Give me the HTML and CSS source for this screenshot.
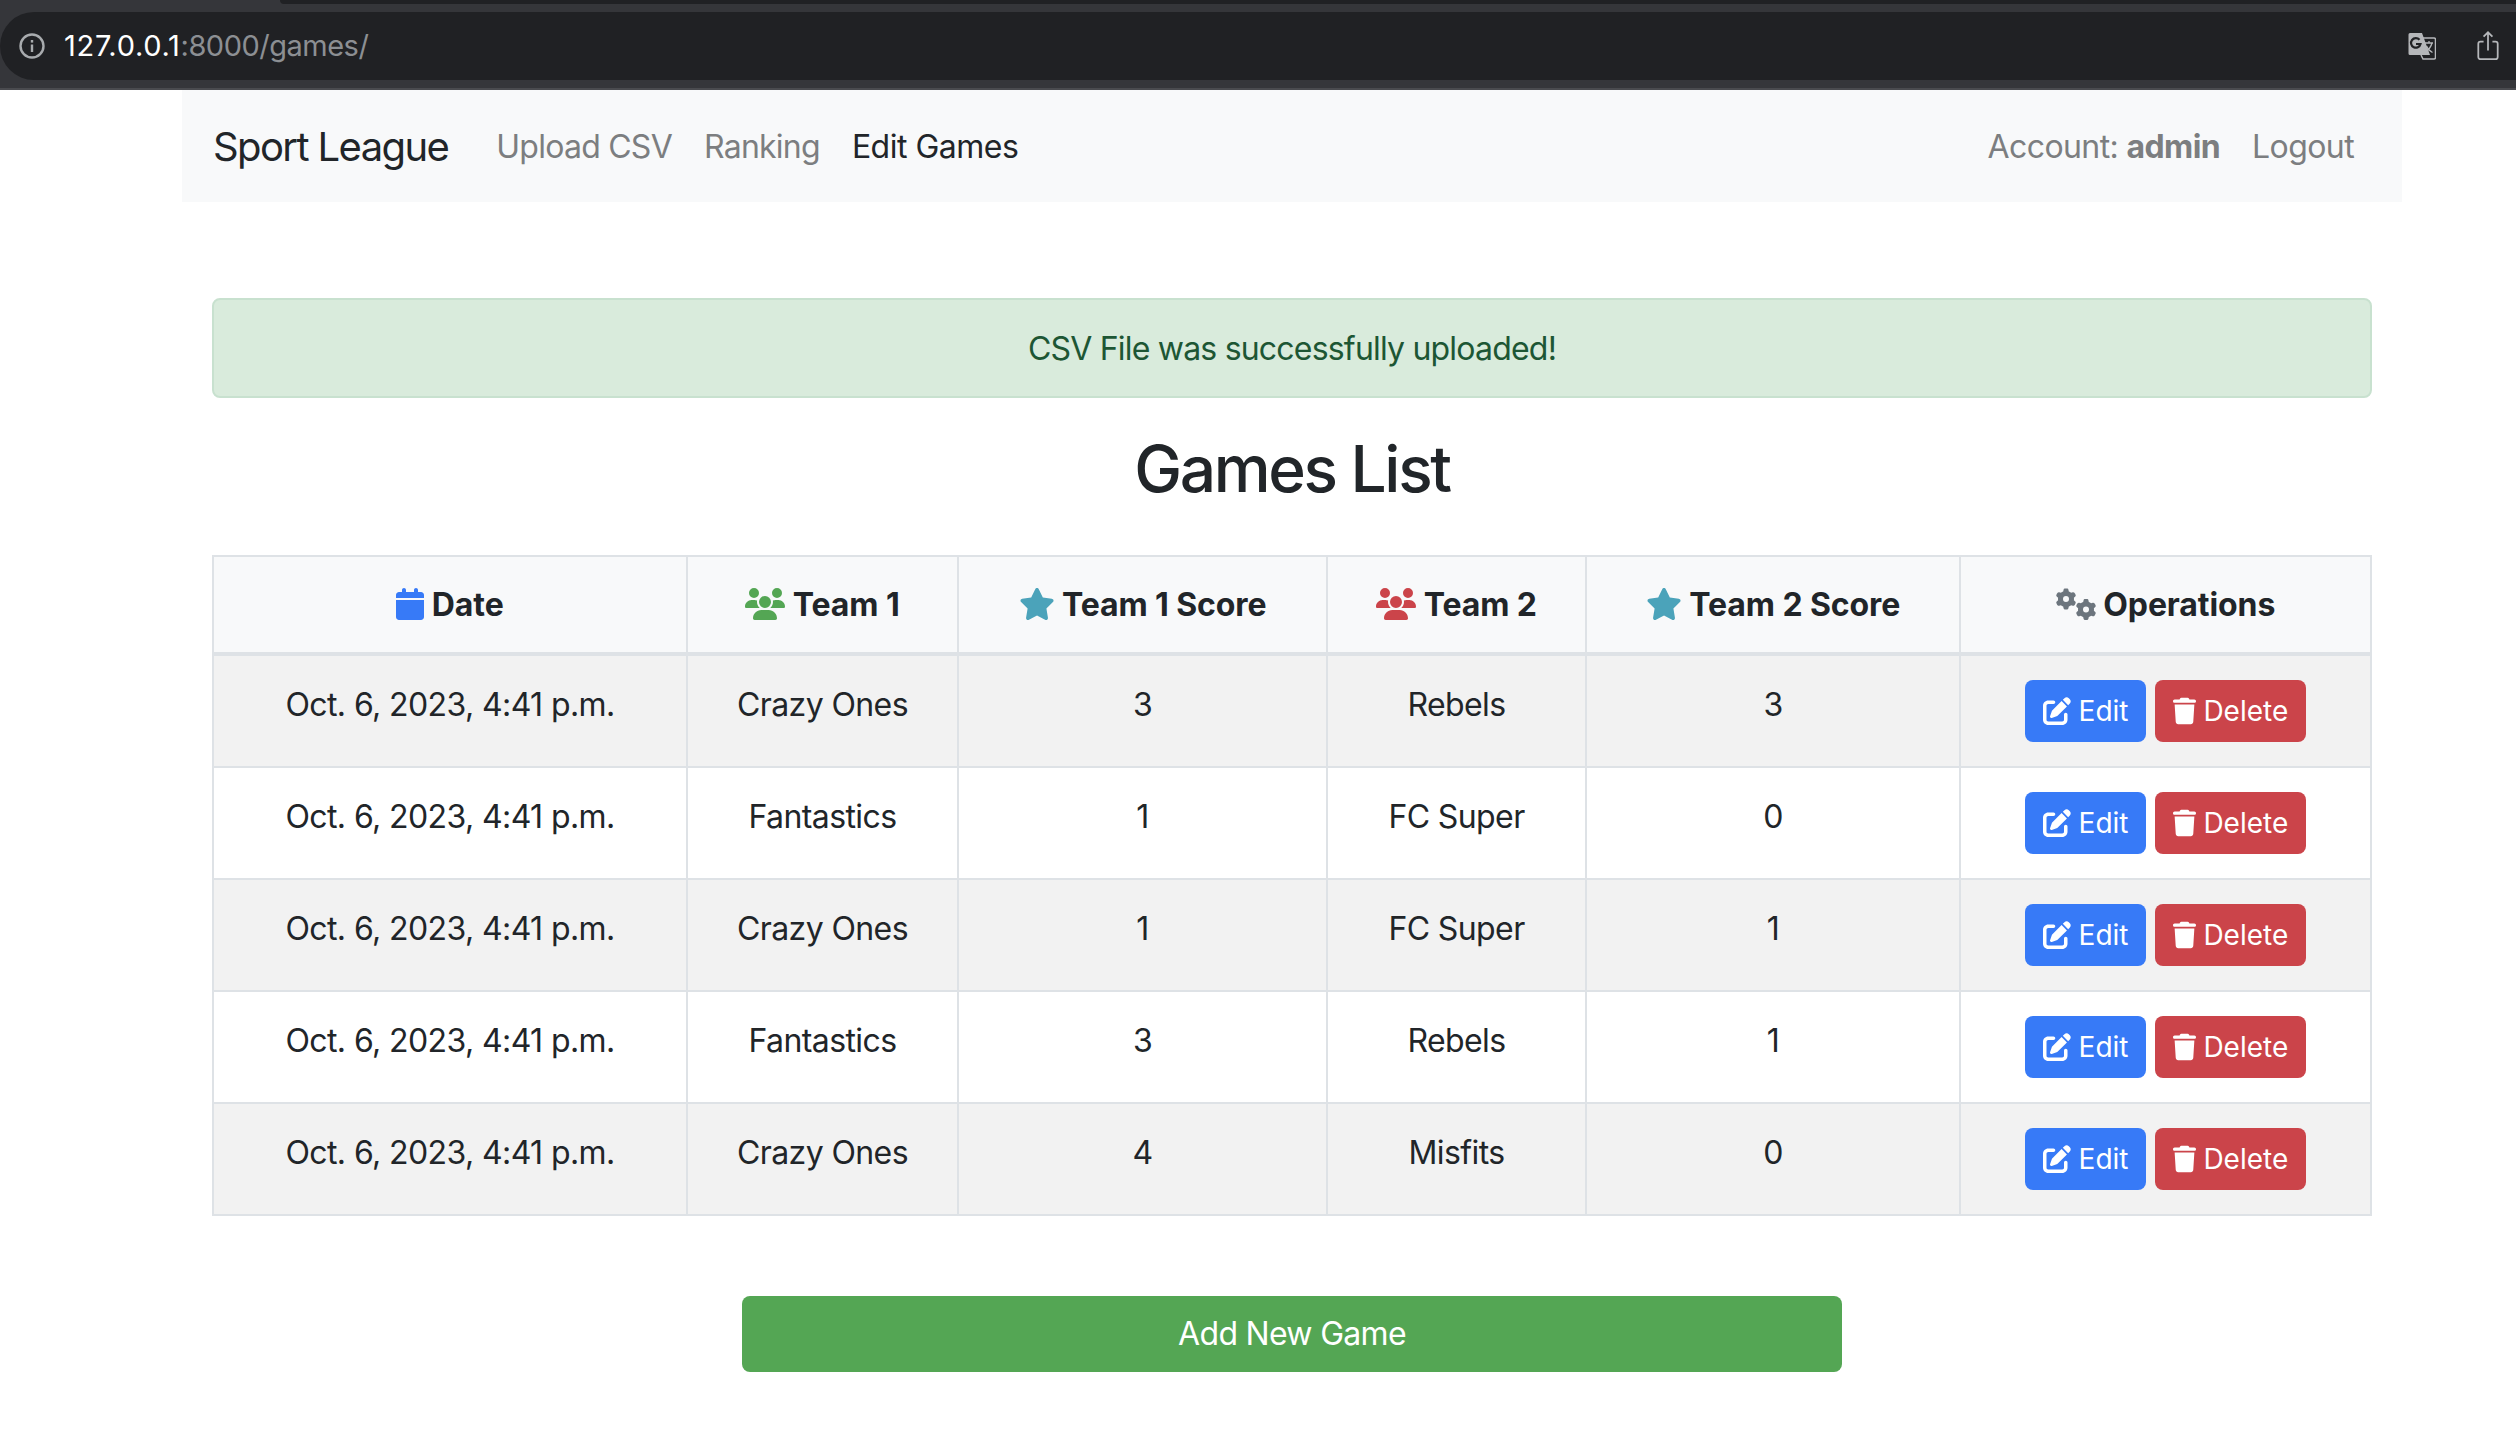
FILE: index.html
```html
<!DOCTYPE html>
<html lang="en">
  <head>
    <meta charset="UTF-8" />
    <title>Games List</title>
    <link rel="stylesheet" href="styles.css">
  </head>
  <body>
    <svg class="defs" aria-hidden="true">
      <symbol id="i-calendar" viewBox="0 0 448 512"><path d="M96 32V64H48C21.5 64 0 85.5 0 112v48H448V112c0-26.5-21.5-48-48-48H352V32c0-17.7-14.3-32-32-32s-32 14.3-32 32V64H160V32c0-17.7-14.3-32-32-32S96 14.3 96 32zM448 192H0V464c0 26.5 21.5 48 48 48H400c26.5 0 48-21.5 48-48V192z"/></symbol>
      <symbol id="i-users" viewBox="0 0 640 512"><path d="M144 0a80 80 0 1 1 0 160A80 80 0 1 1 144 0zM512 0a80 80 0 1 1 0 160A80 80 0 1 1 512 0zM0 298.7C0 239.8 47.8 192 106.7 192h42.7c15.9 0 31 3.5 44.6 9.7c-1.3 7.2-1.9 14.7-1.9 22.3c0 38.2 16.8 72.5 43.3 96c-.2 0-.4 0-.7 0H21.3C9.6 320 0 310.4 0 298.7zM405.3 320c-.2 0-.4 0-.7 0c26.6-23.5 43.3-57.8 43.3-96c0-7.6-.7-15-1.9-22.3c13.6-6.3 28.7-9.7 44.6-9.7h42.7C592.2 192 640 239.8 640 298.7c0 11.8-9.6 21.3-21.3 21.3H405.3zM224 224a96 96 0 1 1 192 0 96 96 0 1 1 -192 0zM128 485.3C128 411.7 187.7 352 261.3 352H378.7C452.3 352 512 411.7 512 485.3c0 14.7-11.9 26.7-26.7 26.7H154.7c-14.7 0-26.7-11.9-26.7-26.7z"/></symbol>
      <symbol id="i-star" viewBox="0 0 576 512"><path d="M316.9 18C311.6 7 300.4 0 288.1 0s-23.4 7-28.8 18L195 150.3 51.4 171.5c-12 1.8-22 10.2-25.7 21.7s-.7 24.2 7.9 32.7L137.8 329 113.2 474.7c-2 12 3 24.2 12.9 31.3s23 8 33.8 2.3l128.3-68.5 128.3 68.5c10.8 5.7 23.9 4.9 33.8-2.3s14.9-19.3 12.9-31.3L438.5 329 542.7 225.9c8.6-8.5 11.7-21.2 7.9-32.7s-13.7-19.9-25.7-21.7L381.2 150.3 316.9 18z"/></symbol>
      <symbol id="i-gears" viewBox="0 0 640 512">
        <path id="gear" d="M308.5 135.3c7.1-6.3 9.9-16.2 6.2-25c-2.3-5.3-4.8-10.5-7.6-15.5L304 89.4c-3-5-6.3-9.9-9.8-14.6c-5.7-7.6-15.7-10.1-24.7-7.1l-28.2 9.3c-10.7-8.8-23-16-36.2-20.9L199 27.1c-1.9-9.3-9.1-16.7-18.5-17.8C173.9 8.4 167.2 8 160.4 8h-.7c-6.8 0-13.5 .4-20.1 1.2c-9.4 1.1-16.6 8.6-18.5 17.8L115 56.1c-13.3 5-25.5 12.1-36.2 20.9L50.5 67.8c-9-3-19-.5-24.7 7.1c-3.5 4.7-6.8 9.6-9.9 14.6l-3 5.3c-2.8 5-5.3 10.2-7.6 15.6c-3.7 8.7-.9 18.6 6.2 25l22.2 19.8C32.6 161.9 32 168.9 32 176s.6 14.1 1.7 20.9L11.5 216.7c-7.1 6.3-9.9 16.2-6.2 25c2.3 5.3 4.8 10.5 7.6 15.6l3 5.2c3 5.1 6.3 9.9 9.9 14.6c5.7 7.6 15.7 10.1 24.7 7.1l28.2-9.3c10.7 8.8 23 16 36.2 20.9l6.1 29.1c1.9 9.3 9.1 16.7 18.5 17.8c6.7 .8 13.5 1.2 20.4 1.2s13.7-.4 20.4-1.2c9.4-1.1 16.6-8.6 18.5-17.8l6.1-29.1c13.3-5 25.5-12.1 36.2-20.9l28.2 9.3c9 3 19 .5 24.7-7.1c3.5-4.7 6.8-9.5 9.8-14.6l3.1-5.4c2.8-5 5.3-10.2 7.6-15.5c3.7-8.7 .9-18.6-6.2-25l-22.2-19.8c1.1-6.8 1.7-13.8 1.7-20.9s-.6-14.1-1.7-20.9l22.2-19.8zM112 176a48 48 0 1 1 96 0 48 48 0 1 1 -96 0z"/>
        <use href="#gear" transform="translate(320 168)"/>
      </symbol>
      <symbol id="i-edit" viewBox="0 0 512 512"><path d="M471.6 21.7c-21.9-21.9-57.3-21.9-79.2 0L362.3 51.7l97.9 97.9 30.1-30.1c21.9-21.9 21.9-57.3 0-79.2L471.6 21.7zm-299.2 220c-6.1 6.1-10.8 13.6-13.5 21.9l-29.6 88.8c-2.9 8.6-.6 18.1 5.8 24.6s15.9 8.7 24.6 5.8l88.8-29.6c8.2-2.7 15.7-7.4 21.9-13.5L437.7 172.3 339.7 74.3 172.4 241.7zM96 64C43 64 0 107 0 160V416c0 53 43 96 96 96H352c53 0 96-43 96-96V320c0-17.7-14.3-32-32-32s-32 14.3-32 32v96c0 17.7-14.3 32-32 32H96c-17.7 0-32-14.3-32-32V160c0-17.7 14.3-32 32-32h96c17.7 0 32-14.3 32-32s-14.3-32-32-32H96z"/></symbol>
      <symbol id="i-trash" viewBox="0 0 448 512"><path d="M135.2 17.7L128 32H32C14.3 32 0 46.3 0 64S14.3 96 32 96H416c17.7 0 32-14.3 32-32s-14.3-32-32-32H320l-7.2-14.3C307.4 6.8 296.3 0 284.2 0H163.8c-12.1 0-23.2 6.8-28.6 17.7zM416 128H32L53.2 467c1.6 25.3 22.6 45 47.9 45H346.9c25.3 0 46.3-19.7 47.9-45L416 128z"/></symbol>
    </svg>

    <!-- Browser toolbar -->
    <div class="toolbar">
      <div class="tab-strip"></div>
      <div class="address">
        <svg class="info-icon" viewBox="0 0 26 26" fill="none" stroke="#a8abae" stroke-width="2.4">
          <circle cx="13" cy="13" r="11.500"/>
          <path d="M13 11.500v7.500"/>
          <path d="M13 7v2.600"/>
        </svg>
        <span class="url">127.0.0.1<span class="url-rest">:8000/games/</span></span>
        <div class="address-actions">
          <svg class="translate-icon" viewBox="0 0 28 28">
            <path d="M2 1h12l8 22H2a1.500 1.500 0 0 1-1.500-1.500V2.500A1.500 1.500 0 0 1 2 1z" fill="#b5b7ba"/>
            <path d="M13 6h13a1.500 1.500 0 0 1 1.500 1.500v18a1.500 1.500 0 0 1-1.500 1.500H15l-2-4" fill="none" stroke="#b5b7ba" stroke-width="1.500"/>
            <path d="M11.500 7.800a4.800 4.800 0 1 0 1 4.200H8" fill="none" stroke="#202124" stroke-width="2.200"/>
            <path d="M17 11h8M21 9v2M24 11c-1 4-3.500 7-7 9M18.500 14c1 2.500 3 5 6 6.500" fill="none" stroke="#b5b7ba" stroke-width="1.300"/>
          </svg>
          <svg class="share-icon" viewBox="0 0 24 34" fill="none" stroke="#b5b7ba" stroke-width="2">
            <path d="M7 12H3.500A2.500 2.500 0 0 0 1 14.500v15A2.500 2.500 0 0 0 3.500 32h17a2.500 2.500 0 0 0 2.500-2.500v-15a2.500 2.500 0 0 0-2.500-2.500H17"/>
            <path d="M12 22V2M7 6.500L12 1.500l5 5"/>
          </svg>
        </div>
      </div>
    </div>

    <nav class="navbar">
      <a class="brand">Sport League</a>
      <a class="nav-link">Upload CSV</a>
      <a class="nav-link">Ranking</a>
      <a class="nav-link active">Edit Games</a>
      <div class="nav-right">
        <span class="nav-link">Account: <b>admin</b></span>
        <a class="nav-link">Logout</a>
      </div>
    </nav>

    <main class="content">
      <div class="alert">CSV File was successfully uploaded!</div>
      <h2 class="title">Games List</h2>

      <table class="games">
        <thead>
          <tr>
            <th class="col-date"><svg class="icon blue"><use href="#i-calendar"/></svg> Date</th>
            <th class="col-team1"><svg class="icon wide green"><use href="#i-users"/></svg> Team 1</th>
            <th class="col-score1"><svg class="icon star teal"><use href="#i-star"/></svg> Team 1 Score</th>
            <th class="col-team2"><svg class="icon wide red"><use href="#i-users"/></svg> Team 2</th>
            <th class="col-score2"><svg class="icon star teal"><use href="#i-star"/></svg> Team 2 Score</th>
            <th class="col-ops"><svg class="icon wide gray"><use href="#i-gears"/></svg> Operations</th>
          </tr>
        </thead>
        <tbody>
          <tr>
            <td>Oct. 6, 2023, 4:41 p.m.</td><td>Crazy Ones</td><td>3</td><td>Rebels</td><td>3</td>
            <td class="ops">
              <a class="btn btn-edit"><svg class="btn-icon"><use href="#i-edit"/></svg> Edit</a>
              <a class="btn btn-delete"><svg class="btn-icon trash"><use href="#i-trash"/></svg> Delete</a>
            </td>
          </tr>
          <tr>
            <td>Oct. 6, 2023, 4:41 p.m.</td><td>Fantastics</td><td>1</td><td>FC Super</td><td>0</td>
            <td class="ops">
              <a class="btn btn-edit"><svg class="btn-icon"><use href="#i-edit"/></svg> Edit</a>
              <a class="btn btn-delete"><svg class="btn-icon trash"><use href="#i-trash"/></svg> Delete</a>
            </td>
          </tr>
          <tr>
            <td>Oct. 6, 2023, 4:41 p.m.</td><td>Crazy Ones</td><td>1</td><td>FC Super</td><td>1</td>
            <td class="ops">
              <a class="btn btn-edit"><svg class="btn-icon"><use href="#i-edit"/></svg> Edit</a>
              <a class="btn btn-delete"><svg class="btn-icon trash"><use href="#i-trash"/></svg> Delete</a>
            </td>
          </tr>
          <tr>
            <td>Oct. 6, 2023, 4:41 p.m.</td><td>Fantastics</td><td>3</td><td>Rebels</td><td>1</td>
            <td class="ops">
              <a class="btn btn-edit"><svg class="btn-icon"><use href="#i-edit"/></svg> Edit</a>
              <a class="btn btn-delete"><svg class="btn-icon trash"><use href="#i-trash"/></svg> Delete</a>
            </td>
          </tr>
          <tr>
            <td>Oct. 6, 2023, 4:41 p.m.</td><td>Crazy Ones</td><td>4</td><td>Misfits</td><td>0</td>
            <td class="ops">
              <a class="btn btn-edit"><svg class="btn-icon"><use href="#i-edit"/></svg> Edit</a>
              <a class="btn btn-delete"><svg class="btn-icon trash"><use href="#i-trash"/></svg> Delete</a>
            </td>
          </tr>
        </tbody>
      </table>

      <a class="add-game">Add New Game</a>
    </main>
  </body>
</html>
```

FILE: styles.css
```css
html,
body {
  height: 100%;
}
body {
  font-family: "Inter", "Liberation Sans", sans-serif;
  font-size: 32px;
  line-height: 48px;
  color: #212529;
  background: white;
  margin: 0;
  overflow: hidden;
}
.defs {
  display: none;
}

/* Browser toolbar */
.toolbar {
  position: relative;
  height: 76px;
  background: #35363a;
  border-bottom: 2px solid #4a4b4f;
  padding-top: 12px;
}
.tab-strip {
  position: absolute;
  top: 0;
  left: 280px;
  right: 0;
  height: 4px;
  background: #202124;
  border-radius: 0 0 0 6px;
}
.address {
  display: flex;
  align-items: center;
  height: 68px;
  background: #202124;
  border-radius: 34px 0 0 34px;
  padding-left: 19px;
}
.info-icon {
  width: 26px;
  height: 26px;
}
.url {
  margin-left: 19px;
  font-size: 29px;
  letter-spacing: 0.7px;
  color: #ffffff;
}
.url-rest {
  letter-spacing: -0.5px;
  color: #8c8f93;
}
.address-actions {
  margin-left: auto;
  display: flex;
  align-items: center;
  gap: 41px;
  padding-right: 17px;
}
.translate-icon {
  width: 28px;
  height: 28px;
}
.share-icon {
  width: 22px;
  height: 30px;
}

/* Navbar */
.navbar {
  display: flex;
  align-items: center;
  width: 2220px;
  height: 112px;
  margin-left: 182px;
  padding: 2px 32px 0 31px;
  box-sizing: border-box;
  background: #f8f9fa;
}
.brand {
  font-size: 40px;
  letter-spacing: -1.6px;
  color: #212529;
  margin-right: 32px;
}
.nav-link {
  padding: 0 16px;
  letter-spacing: -0.75px;
  color: #7c7e80;
}
.nav-link.active {
  letter-spacing: -0.5px;
  color: #212529;
}
.nav-right {
  display: flex;
  margin-left: auto;
}
.nav-right .nav-link {
  letter-spacing: -0.6px;
}

/* Page content */
.content {
  width: 2160px;
  margin-left: 212px;
  padding-top: 96px;
}
.alert {
  height: 100px;
  line-height: 58px;
  box-sizing: border-box;
  padding: 20px 0;
  letter-spacing: -0.8px;
  text-align: center;
  color: #1d5634;
  background: #d9ebdc;
  border: 2px solid #c8e1cf;
  border-radius: 8px;
}
.title {
  margin: 32px 0 48px;
  font-size: 64px;
  line-height: 77px;
  font-weight: 500;
  letter-spacing: -2.3px;
  text-align: center;
}

/* Games table */
.games {
  width: 2160px;
  table-layout: fixed;
  border-collapse: collapse;
  border: 2px solid #dee2e6;
  text-align: center;
}
.games th,
.games td {
  box-sizing: border-box;
  padding: 25px 16px 23px;
  border: 2px solid #dee2e6;
  vertical-align: top;
}
.games td {
  letter-spacing: -0.6px;
}
.games th {
  background: #f8f9fa;
  font-weight: 700;
  letter-spacing: -0.1px;
  border-bottom-width: 4px;
  padding: 24px 8px 23px;
}
.games tbody tr:nth-child(odd) td {
  background: #f2f2f2;
}
.col-date {
  width: 474px;
}
.col-team1 {
  width: 271px;
}
.col-score1 {
  width: 369px;
}
.col-team2 {
  width: 259px;
}
.col-score2 {
  width: 374px;
}
.icon {
  width: 28px;
  height: 32px;
  vertical-align: -4px;
}
.icon.wide {
  width: 40px;
}
.icon.star {
  width: 36px;
}
.blue {
  fill: #377af7;
}
.green {
  fill: #54a654;
}
.red {
  fill: #cb444a;
}
.teal {
  fill: #4ba3ba;
}
.gray {
  fill: #6c757d;
}

/* Buttons */
.games td.ops {
  padding: 24px 16px;
  white-space: nowrap;
  font-size: 0;
  line-height: 0;
  letter-spacing: 0;
}
.btn {
  display: inline-block;
  vertical-align: top;
  height: 62px;
  box-sizing: border-box;
  padding: 0 17.5px;
  font-size: 28px;
  line-height: 62px;
  color: white;
  border-radius: 8px;
}
.btn-edit {
  background: #377af7;
  margin-right: 9px;
}
.btn-delete {
  background: #cb444a;
}
.btn-icon {
  width: 28px;
  height: 28px;
  fill: white;
  vertical-align: -4px;
}
.btn-icon.trash {
  width: 23px;
}
.add-game {
  display: block;
  width: 1100px;
  height: 76px;
  margin: 80px 0 0 530px;
  line-height: 76px;
  letter-spacing: -0.7px;
  text-align: center;
  color: white;
  background: #54a654;
  border-radius: 8px;
}
```
